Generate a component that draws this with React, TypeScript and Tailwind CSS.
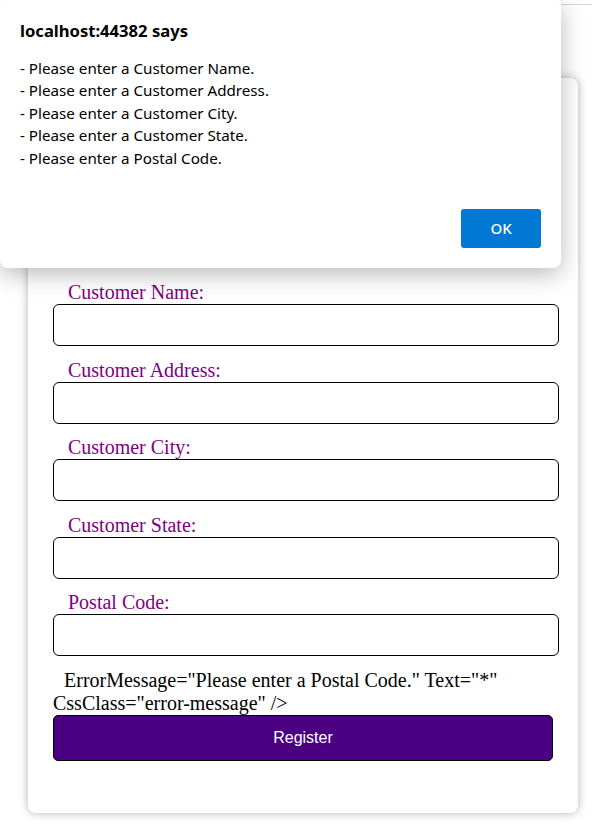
import React from 'react'

const FIELDS = [
  'Customer Name:',
  'Customer Address:',
  'Customer City:',
  'Customer State:',
  'Postal Code:',
]

const MESSAGES = [
  '- Please enter a Customer Name.',
  '- Please enter a Customer Address.',
  '- Please enter a Customer City.',
  '- Please enter a Customer State.',
  '- Please enter a Postal Code.',
]

function AlertDialog() {
  return (
    <div className="absolute left-0 top-0 z-10 flex h-[268px] w-[561px] flex-col rounded-b-lg rounded-t-sm bg-white px-5 pt-[20px] shadow-[0_6px_24px_rgba(0,0,0,0.28)] font-['Noto_Sans',sans-serif] text-black">
      <h1 className="text-[16.6px] font-bold leading-[22px]">localhost:44382 says</h1>
      <div className="mt-[15px] text-[15.2px] leading-[22.4px]">
        {MESSAGES.map((m) => (
          <div key={m}>{m}</div>
        ))}
      </div>
      <div className="mt-auto mb-[20px] flex justify-end">
        <button className="h-[39px] w-[80px] rounded-[3px] bg-[#0078d4] text-[15px] font-medium text-white">
          OK
        </button>
      </div>
    </div>
  )
}

export default function App() {
  return (
    <div className="relative min-h-[831px] w-[592px] overflow-hidden bg-white">
      <div className="h-[5px] border-b border-[#d4d4d4]" />
      <AlertDialog />

      <div className="ml-[28px] mt-[73px] w-[550px] rounded-lg bg-white pl-[25px] pr-[19px] pt-[25px] pb-[52px] shadow-[0_0_10px_rgba(0,0,0,0.3)] font-['Liberation_Serif',serif]">
        <h2 className="mb-[142px] text-center text-[28px] leading-[36px] text-[#4b0082]">
          Customer Registration
        </h2>

        <form onSubmit={(e) => e.preventDefault()}>
          {FIELDS.map((f) => (
            <div key={f} className="mb-[12.5px]">
              <label className="block pl-[15px] text-[20px] leading-[23px] text-[#800080]">
                {f}
              </label>
              <input
                type="text"
                className="block h-[42px] w-[506px] rounded-md border border-black bg-white px-2 text-[16px] outline-none"
              />
            </div>
          ))}

          <p className="indent-[11px] text-[20px] leading-[23px] text-black">
            ErrorMessage="Please enter a Postal Code." Text="*" CssClass="error-message" /&gt;
          </p>

          <button
            type="submit"
            className="block h-[46px] w-[500px] rounded-[5px] border border-black bg-[#4b0082] text-[16px] text-white font-['Liberation_Sans',sans-serif]"
          >
            Register
          </button>
        </form>
      </div>
    </div>
  )
}
